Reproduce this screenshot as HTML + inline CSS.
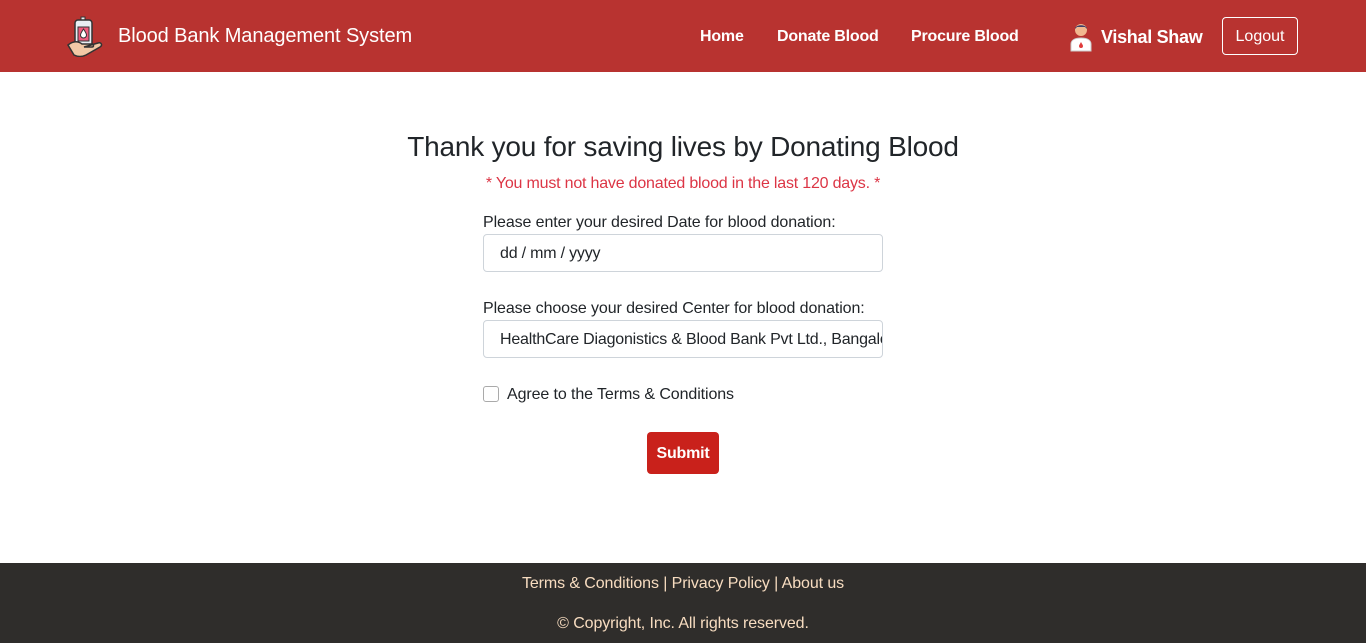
<!DOCTYPE html>
<html><head><meta charset="utf-8"><style>
*{box-sizing:border-box;margin:0;padding:0}
body{width:1366px;height:643px;font-family:"Liberation Sans",sans-serif;background:#fff;position:relative;overflow:hidden;color:#212529}
.nav{position:absolute;top:0;left:0;width:1366px;height:72px;background:#b83330;color:#fff}
.abs{position:absolute;white-space:nowrap}
.brand{left:118px;top:25px;font-size:20px;letter-spacing:-0.1px}
.nl{top:28px;font-size:16px;font-weight:bold;letter-spacing:-0.2px}
.logout{left:1222px;top:17px;width:76px;height:38px;border:1px solid #fff;border-radius:4px;font-size:16px;text-align:center;line-height:38px}
h1{position:absolute;left:0;width:1366px;top:131px;text-align:center;font-size:28px;font-weight:normal;letter-spacing:-0.2px}
.warn{left:0;width:1366px;text-align:center;top:175px;color:#dc3545;font-size:16px;letter-spacing:-0.2px}
.lbl{left:483px;font-size:16px;letter-spacing:-0.1px}
.inp{position:absolute;left:483px;width:400px;height:38px;border:1px solid #ced4da;border-radius:4px;padding:0 16px;line-height:38px;font-size:16px;overflow:hidden;white-space:nowrap;letter-spacing:-0.2px}
.cb{left:483px;top:386px;width:16px;height:16px;border:1px solid #aaa;border-radius:3px}
.btn{left:647px;top:432px;width:72px;height:42px;background:#c9211b;color:#fff;border-radius:4px;font-weight:bold;font-size:16px;text-align:center;line-height:44px;letter-spacing:-0.2px}
.foot{position:absolute;left:0;top:563px;width:1366px;height:80px;background:#2f2d2b;color:#f7dcc0;font-size:16px;text-align:center;letter-spacing:-0.1px}
</style></head><body>
<div class="nav">
<svg class="abs" style="left:66px;top:15px" width="44" height="42" viewBox="0 0 44 42">
<rect x="15" y="2" width="4" height="4" fill="#eee" stroke="#333"/>
<rect x="9" y="5" width="17" height="26" rx="3" fill="#e9eef4" stroke="#333" stroke-width="1.5"/>
<rect x="12" y="12" width="11" height="14" fill="#ef5b7d" stroke="#333"/>
<path d="M17.5 14c-2 3-3 4.5-3 6a3 3 0 0 0 6 0c0-1.5-1-3-3-6z" fill="#fff" stroke="#333"/>
<path d="M2 30c5-4 10-4 14-1l10 0c2 0 2 3 0 3l-8 0 14-4c3-1 5 2 2 4l-14 8c-4 2-8 2-12 0z" fill="#f2c9a6" stroke="#333" stroke-width="1.5"/>
</svg>
<div class="abs brand">Blood Bank Management System</div>
<div class="abs nl" style="left:700px">Home</div>
<div class="abs nl" style="left:777px">Donate Blood</div>
<div class="abs nl" style="left:911px">Procure Blood</div>
<svg class="abs" style="left:1068px;top:20px" width="26" height="32" viewBox="0 0 26 32">
<path d="M3 31v-7c0-4 4-6 10-6s10 2 10 6v7z" fill="#fff" stroke="#ccc"/>
<circle cx="13" cy="10" r="6" fill="#f2b78f"/>
<path d="M7 9c0-5 12-5 12 0l-2-2h-8z" fill="#3d3f6a"/>
<path d="M13 22c-1 2-2 3-2 4a2 2 0 0 0 4 0c0-1-1-2-2-4z" fill="#e03b3b"/>
</svg>
<div class="abs" style="left:1101px;top:27px;font-size:18px;font-weight:bold;letter-spacing:-0.3px">Vishal Shaw</div>
<div class="abs logout">Logout</div>
</div>
<h1>Thank you for saving lives by Donating Blood</h1>
<div class="abs warn">* You must not have donated blood in the last 120 days. *</div>
<div class="abs lbl" style="top:214px">Please enter your desired Date for blood donation:</div>
<div class="inp" style="top:234px">dd / mm / yyyy</div>
<div class="abs lbl" style="top:300px">Please choose your desired Center for blood donation:</div>
<div class="inp" style="top:320px">HealthCare Diagonistics &amp; Blood Bank Pvt Ltd., Bangalore</div>
<div class="abs cb"></div>
<div class="abs" style="left:507px;top:386px;font-size:16px;letter-spacing:-0.1px">Agree to the Terms &amp; Conditions</div>
<div class="abs btn">Submit</div>
<div class="foot"><div style="margin-top:12px">Terms &amp; Conditions | Privacy Policy | About us</div><div style="margin-top:22px">© Copyright, Inc. All rights reserved.</div></div>
</body></html>
